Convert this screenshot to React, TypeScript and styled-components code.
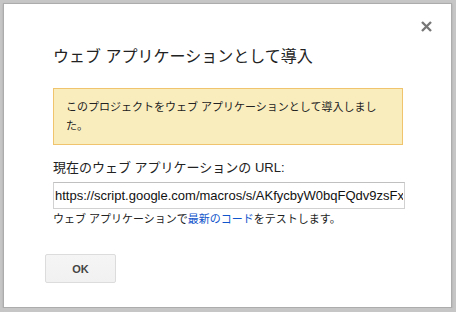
import styled, { createGlobalStyle } from "styled-components";

const GlobalStyle = createGlobalStyle`
  html, body {
    margin: 0;
    padding: 0;
    background: #c6c6c6;
  }
  body {
    font-family: "Liberation Sans", "Noto Sans CJK JP", sans-serif;
  }
`;

const Dialog = styled.div`
  position: relative;
  box-sizing: border-box;
  margin: 3px 0 0 3px;
  width: 449px;
  height: 305px;
  background: #fff;
  border: 1px solid #acacac;
  box-shadow: 0 1px 2px rgba(0, 0, 0, 0.15);
  padding: 43px 46px 0 49px;
`;

const Close = styled.button`
  position: absolute;
  top: 12px;
  right: 15px;
  width: 20px;
  height: 20px;
  padding: 0;
  border: 0;
  background: none;
  display: flex;
  align-items: center;
  justify-content: center;
  cursor: pointer;
`;

const Title = styled.h1`
  margin: 0;
  font-size: 16px;
  font-weight: normal;
  line-height: 20px;
  color: #222;
`;

const Notice = styled.div`
  margin-top: 21px;
  width: 350px;
  box-sizing: border-box;
  background: #f9edbe;
  border: 1px solid #f0c36d;
  padding: 9px 13px 8px 12px;
  font-size: 11px;
  line-height: 19px;
  color: #222;
`;

const Label = styled.div`
  margin-top: 15px;
  font-size: 13px;
  line-height: 16px;
  color: #222;
`;

const UrlInput = styled.input`
  display: block;
  margin-top: 6px;
  box-sizing: border-box;
  width: 352px;
  height: 27px;
  padding: 0 1px;
  border: 1px solid #d1d1d1;
  border-top-color: #c0c0c0;
  font-family: "Liberation Sans", sans-serif;
  font-size: 13px;
  color: #111;
  outline: none;
`;

const Help = styled.div`
  margin-top: 3px;
  font-size: 11px;
  line-height: 14px;
  color: #222;
`;

const Link = styled.a`
  color: #1155cc;
  text-decoration: none;
`;

const Footer = styled.div`
  margin: 28px 0 0 -8px;
  display: flex;
`;

const Button = styled.button`
  box-sizing: border-box;
  width: 71px;
  height: 29px;
  border: 1px solid #dcdcdc;
  border-radius: 2px;
  background: linear-gradient(#f5f5f5, #f1f1f1);
  font-family: "Liberation Sans", sans-serif;
  font-weight: bold;
  font-size: 11px;
  color: #444;
  cursor: pointer;
`;

export default function App() {
  return (
    <>
      <GlobalStyle />
      <Dialog>
        <Close aria-label="閉じる">
          <svg width="11" height="11" viewBox="0 0 11 11">
            <path d="M1 1L10 10M10 1L1 10" stroke="#777" strokeWidth="2.4" />
          </svg>
        </Close>
        <Title>ウェブ アプリケーションとして導入</Title>
        <Notice>このプロジェクトをウェブ アプリケーションとして導入しました。</Notice>
        <Label>現在のウェブ アプリケーションの URL:</Label>
        <UrlInput
          readOnly
          value="https://script.google.com/macros/s/AKfycbyW0bqFQdv9zsFx9lT3aQ/exec"
        />
        <Help>
          ウェブ アプリケーションで<Link href="#">最新のコード</Link>をテストします。
        </Help>
        <Footer>
          <Button>OK</Button>
        </Footer>
      </Dialog>
    </>
  );
}
